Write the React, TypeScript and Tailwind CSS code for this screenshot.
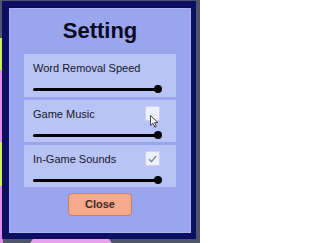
import React from 'react'

const FONT = { fontFamily: '"Liberation Sans", Arial, sans-serif' }

function Slider() {
  return (
    <div className="flex items-center h-[8px] mt-[10px] ml-[9px]">
      <div className="w-[122px] h-[3px] bg-black rounded-l-full" />
      <div className="w-[8px] h-[8px] -ml-[1px] rounded-full bg-black" />
    </div>
  )
}

function Checkbox({ checked }: { checked: boolean }) {
  return (
    <div className="w-[15px] h-[15px] rounded-[2px] bg-[#eef0fb] border border-[#cdd2ef] flex items-center justify-center">
      {checked && (
        <svg width="9" height="8" viewBox="0 0 9 8">
          <path d="M1 4.2 L3.5 6.6 L8 1.2" fill="none" stroke="#6b6f80" strokeWidth="1.1" />
        </svg>
      )}
    </div>
  )
}

function SettingRow({ label, tall, checkbox }: { label: string; tall?: boolean; checkbox?: 'on' | 'off' }) {
  return (
    <div className={`w-[152px] bg-[#b8c4f6] ${tall ? 'h-[43px]' : 'h-[42px]'}`}>
      <div className="flex items-center justify-between h-[15px] mt-[6px] pl-[9px] pr-[16px]">
        <span className="text-[11px] leading-[14px] text-[#16162a]">{label}</span>
        {checkbox && <Checkbox checked={checkbox === 'on'} />}
      </div>
      <Slider />
    </div>
  )
}

export default function App() {
  return (
    <div className="relative w-[200px] h-[243px] bg-[#50566a] overflow-hidden" style={FONT}>
      {/* game canvas peeking out behind the modal */}
      <div className="absolute left-0 top-[38px] w-[3px] h-[32px] bg-[#c9ee62]" />
      <div className="absolute left-0 top-[70px] w-[3px] h-[72px] bg-[#e48be6]" />
      <div className="absolute left-0 top-[142px] w-[3px] h-[44px] bg-[#d4ef5c]" />
      <div className="absolute left-0 top-[186px] w-[3px] h-[57px] bg-[#e48be6]" />
      <div className="absolute left-[30px] top-[236px] w-[82px] h-[20px] rounded-full bg-[#e9a2ee]" />

      <div className="relative pt-[1px] pl-[2px]">
        <div className="w-[194px] h-[238px] bg-[#0c0e62] pl-[7px] pt-[7px] pr-[5px] pb-[6px]">
          <div className="w-[182px] h-[225px] bg-[#99a5ec] border border-[#aab4f2] flex flex-col items-center">
            <div className="mt-[9px] h-[26px] text-[22px] leading-[26px] font-bold text-[#0a0a22]">Setting</div>
            <div className="mt-[10px] flex flex-col gap-[3px]">
              <SettingRow label="Word Removal Speed" tall />
              <SettingRow label="Game Music" checkbox="off" />
              <SettingRow label="In-Game Sounds" checkbox="on" />
            </div>
            <button className="mt-[6px] w-[64px] h-[23px] rounded-[4px] bg-[#f6aa8c] border border-[#c98068] text-[11px] font-bold text-[#3d2a28]">
              Close
            </button>
          </div>
        </div>
      </div>

      {/* mouse cursor */}
      <svg className="absolute left-[150px] top-[115px]" width="9" height="13" viewBox="0 0 9 13">
        <path d="M0.5 0.5 L0.5 10.5 L3 8.2 L4.8 12.2 L6.3 11.5 L4.6 7.6 L8 7.6 Z" fill="#ffffff" stroke="#303040" strokeWidth="0.9" strokeLinejoin="round" />
      </svg>
    </div>
  )
}
